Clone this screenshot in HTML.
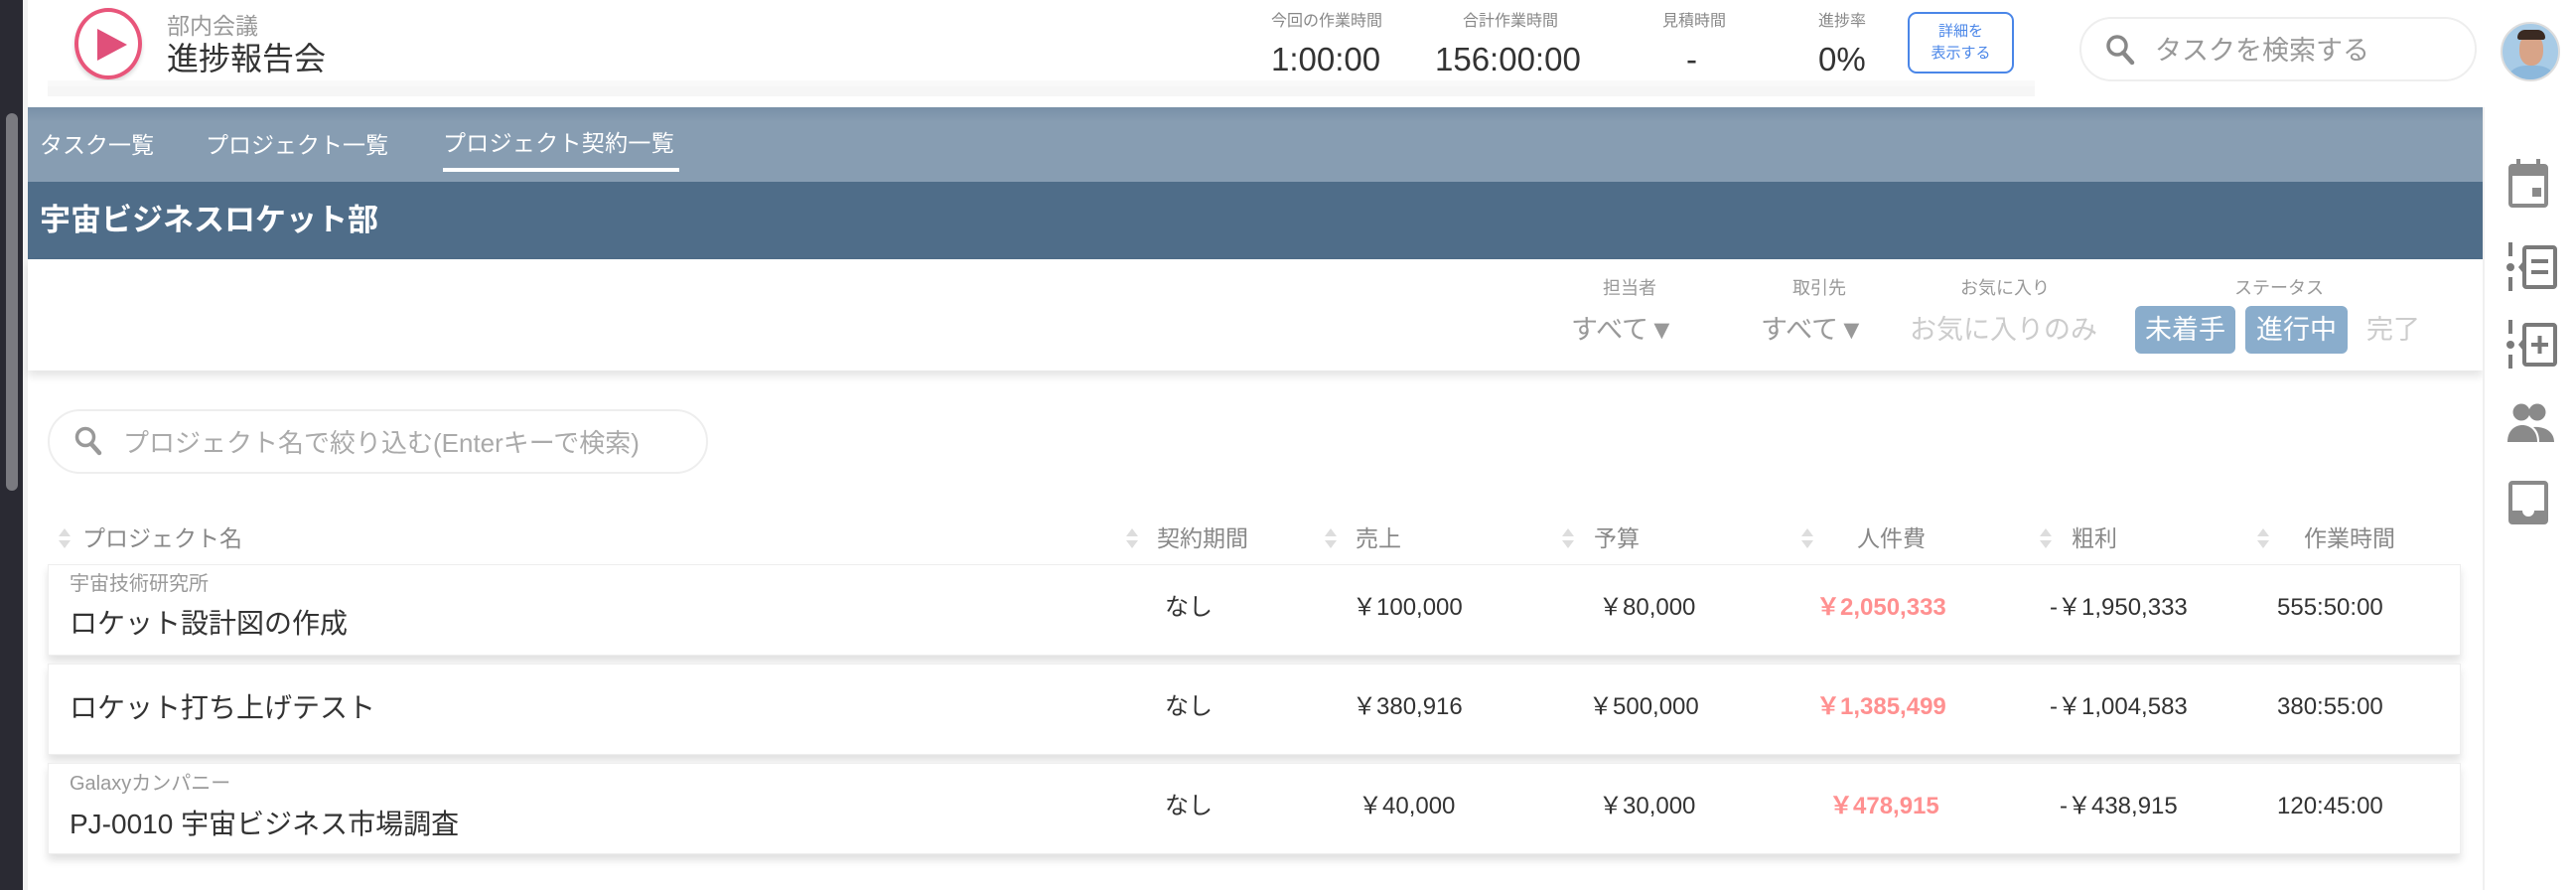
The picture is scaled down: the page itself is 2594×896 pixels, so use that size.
<!DOCTYPE html>
<html><head><meta charset="utf-8"><style>
*{margin:0;padding:0;box-sizing:border-box}
body{width:2594px;height:896px;overflow:hidden;background:#fff;font-family:"Liberation Sans","Noto Sans CJK JP",sans-serif;position:relative;color:#333;line-height:1}
.a{position:absolute;white-space:nowrap;line-height:1}
.lbl{font-size:16px;color:#888}
.val{font-size:33px;color:#333}
.hd{font-size:23px;color:#888;top:531px}
.arr{position:absolute;width:14px;height:22px}
.row{position:absolute;left:48px;width:2430px;height:92px;background:#fff;border:1px solid #eee;box-shadow:0 6px 8px rgba(0,0,0,.12)}
.n{font-size:24px;color:#333}
.red{color:#ff9090;font-weight:bold}
</style></head><body>
<div class="a" style="left:0;top:0;width:23px;height:896px;background:#2a2a33"></div>
<div class="a" style="left:6px;top:114px;width:12px;height:380px;background:#7a7a80;border-radius:6px"></div>
<div class="a" style="left:23px;top:0;width:5px;height:896px;background:#f2f2f2"></div>
<!-- header -->
<div class="a" style="left:75px;top:8px;width:68px;height:72px;border:4px solid #e8557a;border-radius:50%;box-shadow:0 3px 4px rgba(0,0,0,.15)"></div>
<svg class="a" style="left:96px;top:27px" width="34" height="36"><path d="M2 2 L32 18 L2 34Z" fill="#e0507a"/></svg>
<div class="a" style="left:168px;top:15px;font-size:23px;color:#999">部内会議</div>
<div class="a" style="left:168px;top:43px;font-size:32px;color:#333">進捗報告会</div>
<div class="a" style="left:48px;top:81px;width:2001px;height:16px;background:#f6f6f6;border-top:6px solid #f9f9f9"></div>
<div class="a lbl" style="left:1280px;top:14px">今回の作業時間</div>
<div class="a lbl" style="left:1473px;top:14px">合計作業時間</div>
<div class="a lbl" style="left:1674px;top:14px">見積時間</div>
<div class="a lbl" style="left:1831px;top:14px">進捗率</div>
<div class="a val" style="left:1280px;top:43px">1:00:00</div>
<div class="a val" style="left:1445px;top:43px">156:00:00</div>
<div class="a val" style="left:1698px;top:43px">-</div>
<div class="a val" style="left:1831px;top:43px">0%</div>
<div class="a" style="left:1921px;top:12px;width:107px;height:62px;border:2px solid #4a86e8;border-radius:9px;color:#4a86e8;font-size:15px;text-align:center;line-height:22px;padding-top:7px">詳細を<br>表示する</div>
<div class="a" style="left:2094px;top:17px;width:400px;height:65px;border:2px solid #eee;border-radius:33px"></div>
<svg class="a" style="left:2120px;top:34px" width="30" height="32"><circle cx="12" cy="12" r="9" fill="none" stroke="#888" stroke-width="3.5"/><path d="M18 19 L27 29" stroke="#888" stroke-width="4.5" stroke-linecap="round"/></svg>
<div class="a" style="left:2170px;top:38px;font-size:27px;color:#999">タスクを検索する</div>
<div class="a" style="left:2518px;top:22px;width:60px;height:60px;border-radius:50%;overflow:hidden;background:#a8cbe6;border:2px solid #ddd">
<div class="a" style="left:17px;top:10px;width:24px;height:32px;border-radius:45%;background:#d8a488"></div>
<div class="a" style="left:15px;top:6px;width:28px;height:10px;border-radius:10px 10px 3px 3px;background:#3a2a22"></div>
<div class="a" style="left:6px;top:42px;width:46px;height:30px;border-radius:40% 40% 0 0;background:#8cb8dc"></div>
</div>
<!-- bands -->
<div class="a" style="left:28px;top:108px;width:2472px;height:75px;background:linear-gradient(#7890a8,#879db2 20%,#879db2)"></div>
<div class="a" style="left:40px;top:135px;font-size:23px;color:#fff">タスク一覧</div>
<div class="a" style="left:207px;top:135px;font-size:23px;color:#fff">プロジェクト一覧</div>
<div class="a" style="left:446px;top:133px;font-size:23px;color:#fff;letter-spacing:.3px">プロジェクト契約一覧</div>
<div class="a" style="left:446px;top:169px;width:238px;height:4px;background:#fff"></div>
<div class="a" style="left:28px;top:183px;width:2472px;height:78px;background:#4f6d89"></div>
<div class="a" style="left:40px;top:206px;font-size:31px;font-weight:bold;color:#fff">宇宙ビジネスロケット部</div>
<!-- filter -->
<div class="a" style="left:28px;top:261px;width:2472px;height:112px;background:#fff;box-shadow:0 6px 8px rgba(0,0,0,.1)"></div>
<div class="a lbl" style="left:1614px;top:281px;font-size:18px;color:#999">担当者</div>
<div class="a lbl" style="left:1805px;top:281px;font-size:18px;color:#999">取引先</div>
<div class="a lbl" style="left:1974px;top:281px;font-size:18px;color:#999">お気に入り</div>
<div class="a lbl" style="left:2250px;top:281px;font-size:18px;color:#999">ステータス</div>
<div class="a" style="left:1582px;top:319px;font-size:27px;color:#999">すべて▼</div>
<div class="a" style="left:1773px;top:319px;font-size:27px;color:#999">すべて▼</div>
<div class="a" style="left:1923px;top:319px;font-size:27px;color:#ccc">お気に入りのみ</div>
<div class="a" style="left:2150px;top:308px;width:101px;height:48px;background:#8aadcc;border-radius:6px;color:#fff;font-size:27px;text-align:center;line-height:48px">未着手</div>
<div class="a" style="left:2261px;top:308px;width:103px;height:48px;background:#8aadcc;border-radius:6px;color:#fff;font-size:27px;text-align:center;line-height:48px">進行中</div>
<div class="a" style="left:2383px;top:319px;font-size:27px;color:#ccc">完了</div>
<!-- right sidebar -->
<div class="a" style="left:2500px;top:108px;width:94px;height:788px;background:#fff;border-left:2px solid #f0f0f0"></div>
<svg class="a" style="left:2520px;top:155px" width="60" height="400" fill="#8a8a8a">
<path d="M10 10h4v-5h4v5h16v-5h4v5h4a4 4 0 0 1 4 4v36a4 4 0 0 1-4 4h-32a4 4 0 0 1-4-4v-36a4 4 0 0 1 4-4zM10 22v28h32v-28z"/><rect x="30" y="34" width="9" height="9"/>
<g fill="#7a7a7a"><rect x="6" y="89" width="4" height="14"/><rect x="6" y="124" width="4" height="14"/><circle cx="8" cy="114" r="4"/><path d="M20 96a4 4 0 0 1 4-4h27a4 4 0 0 1 4 4v36a4 4 0 0 1-4 4h-27a4 4 0 0 1-4-4v-13l-4-5 4-5zM24 96v36h27v-36z"/><rect x="29" y="106" width="17" height="4"/><rect x="29" y="117" width="17" height="4"/>
<rect x="6" y="167" width="4" height="14"/><rect x="6" y="202" width="4" height="14"/><circle cx="8" cy="192" r="4"/><path d="M20 174a4 4 0 0 1 4-4h27a4 4 0 0 1 4 4v36a4 4 0 0 1-4 4h-27a4 4 0 0 1-4-4v-13l-4-5 4-5zM24 174v36h27v-36z"/><rect x="29" y="190" width="17" height="4"/><rect x="35.5" y="183" width="4" height="18"/></g>
<circle cx="19" cy="260" r="8.5"/><circle cx="35" cy="260" r="8.5"/><path d="M5 290c0-12 8-17 15-17s15 5 15 17z"/><path d="M37 290c0-7-2-12-6-15 9-1 21 3 21 15z"/>
<path d="M10 329h32a4 4 0 0 1 4 4v36a4 4 0 0 1-4 4h-32a4 4 0 0 1-4-4v-36a4 4 0 0 1 4-4zM10 333v26h10a6 6 0 0 0 12 0h10v-26z"/>
</svg>
<!-- project search -->
<div class="a" style="left:48px;top:412px;width:665px;height:65px;border:2px solid #eee;border-radius:33px"></div>
<svg class="a" style="left:74px;top:428px" width="30" height="32"><circle cx="12" cy="12" r="8.5" fill="none" stroke="#999" stroke-width="3.5"/><path d="M18 19 L26 28" stroke="#999" stroke-width="4.5" stroke-linecap="round"/></svg>
<div class="a" style="left:124px;top:433px;font-size:26px;color:#aaa">プロジェクト名で絞り込む(Enterキーで検索)</div>
<!-- table header -->
<svg width="0" height="0" style="position:absolute"><defs><g id="ar"><path d="M7 1L13 9H1Z" fill="#ddd"/><path d="M7 21L13 13H1Z" fill="#ddd"/></g></defs></svg>
<svg class="arr" style="left:58px;top:531px"><use href="#ar"/></svg><div class="a hd" style="left:83px">プロジェクト名</div>
<svg class="arr" style="left:1133px;top:531px"><use href="#ar"/></svg><div class="a hd" style="left:1165px">契約期間</div>
<svg class="arr" style="left:1333px;top:531px"><use href="#ar"/></svg><div class="a hd" style="left:1365px">売上</div>
<svg class="arr" style="left:1572px;top:531px"><use href="#ar"/></svg><div class="a hd" style="left:1605px">予算</div>
<svg class="arr" style="left:1813px;top:531px"><use href="#ar"/></svg><div class="a hd" style="left:1870px">人件費</div>
<svg class="arr" style="left:2053px;top:531px"><use href="#ar"/></svg><div class="a hd" style="left:2086px">粗利</div>
<svg class="arr" style="left:2272px;top:531px"><use href="#ar"/></svg><div class="a hd" style="left:2320px">作業時間</div>
<!-- rows -->
<div class="row" style="top:568px"></div>
<div class="row" style="top:668px"></div>
<div class="row" style="top:768px"></div>
<div class="a" style="left:70px;top:578px;font-size:20px;color:#999">宇宙技術研究所</div>
<div class="a" style="left:70px;top:614px;font-size:28px">ロケット設計図の作成</div>
<div class="a" style="left:70px;top:699px;font-size:28px">ロケット打ち上げテスト</div>
<div class="a" style="left:70px;top:779px;font-size:20px;color:#999">Galaxyカンパニー</div>
<div class="a" style="left:70px;top:816px;font-size:28px">PJ-0010 宇宙ビジネス市場調査</div>

<div class="a n" style="left:1173px;top:600px">なし</div>
<div class="a n" style="left:1362px;top:600px">￥100,000</div>
<div class="a n" style="left:1610px;top:600px">￥80,000</div>
<div class="a n red" style="left:1829px;top:600px">￥2,050,333</div>
<div class="a n" style="left:2064px;top:600px">-￥1,950,333</div>
<div class="a n" style="left:2293px;top:600px">555:50:00</div>

<div class="a n" style="left:1173px;top:700px">なし</div>
<div class="a n" style="left:1362px;top:700px">￥380,916</div>
<div class="a n" style="left:1600px;top:700px">￥500,000</div>
<div class="a n red" style="left:1829px;top:700px">￥1,385,499</div>
<div class="a n" style="left:2064px;top:700px">-￥1,004,583</div>
<div class="a n" style="left:2293px;top:700px">380:55:00</div>

<div class="a n" style="left:1173px;top:800px">なし</div>
<div class="a n" style="left:1368px;top:800px">￥40,000</div>
<div class="a n" style="left:1610px;top:800px">￥30,000</div>
<div class="a n red" style="left:1842px;top:800px">￥478,915</div>
<div class="a n" style="left:2074px;top:800px">-￥438,915</div>
<div class="a n" style="left:2293px;top:800px">120:45:00</div>
</body></html>
